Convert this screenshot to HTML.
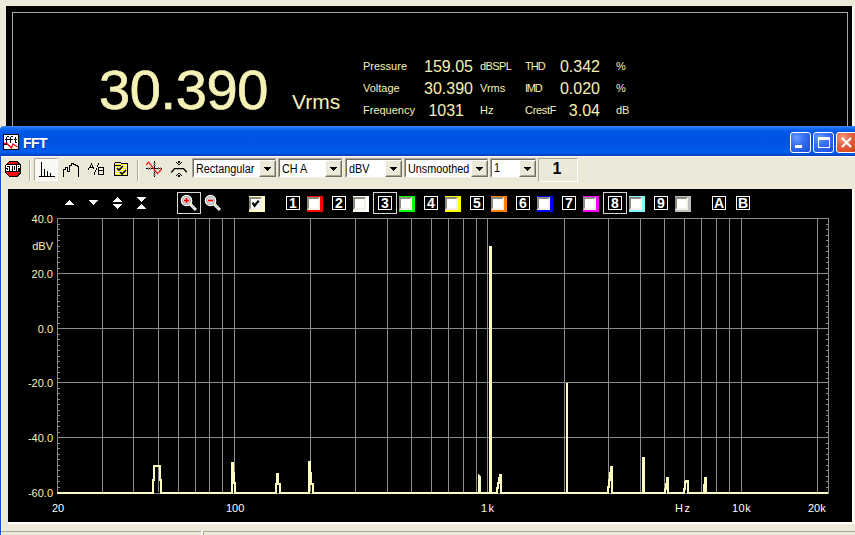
<!DOCTYPE html>
<html><head><meta charset="utf-8">
<style>
*{margin:0;padding:0;box-sizing:border-box}
html,body{width:855px;height:535px;overflow:hidden;background:#ece9d8;font-family:"Liberation Sans",sans-serif}
.a{position:absolute}
#top{left:6px;top:6px;width:846px;height:125px;background:#000}
#topw{left:852px;top:6px;width:2px;height:125px;background:#fffdf8}
#topin{left:12px;top:12px;width:836px;height:130px;border:1px solid #a8a8a8;border-bottom:none}
.y{color:#f6f1b6}
.lbl{font-size:11px;line-height:13px;white-space:nowrap}
.num{font-size:16px;line-height:18px;white-space:nowrap}
#win{left:0;top:126px;width:855px;height:409px;background:#ece9d8}
#title{left:0;top:126px;width:880px;height:30px;border-radius:4px 4px 0 0;
 background:linear-gradient(#3a86f4 0px,#2a7cf6 1px,#0f66f0 3px,#0058e8 6px,#0053e2 12px,#0055e6 20px,#005ef2 26px,#0050d8 28px,#003fb8 30px)}
#lb{left:0;top:156px;width:1px;height:379px;background:#0a4fd8}
#lb2{left:1px;top:156px;width:1px;height:379px;background:#fbf9f1}
#graph{left:8px;top:189px;width:844px;height:333px;background:#000}
#gw{left:8px;top:522px;width:847px;height:2px;background:#fffef8}
#gw2{left:852px;top:189px;width:2px;height:335px;background:#fffef8}
#stat{left:1px;top:531px;width:854px;height:1px;background:#aca899}
#stat2{left:201px;top:531px;width:2px;height:4px;background:#fff}
#stat3{left:203px;top:531px;width:1px;height:4px;background:#aca899}
.btn{top:132px;width:21px;height:21px;border:1px solid #fff;border-radius:3px;background:radial-gradient(circle at 30% 25%,#6a9cff 0%,#3a74f4 35%,#2356e6 80%,#1a4ad8 100%)}
.cl{background:radial-gradient(circle at 30% 25%,#f0a080 0%,#e46444 40%,#d84a20 80%,#c83c14 100%)}
.sep{top:160px;width:2px;height:21px;border-left:1px solid #aca899;border-right:1px solid #fff}
.cb{top:158px;height:20px;background:#fff;border:1px solid;border-color:#aca899 #f1efe2 #f1efe2 #aca899}
.cb:before{content:"";position:absolute;left:0;top:0;right:0;bottom:0;border:1px solid;border-color:#716f64 #fff #fff #716f64}
.cbt{position:absolute;left:3px;font-size:12px;line-height:14px;color:#000;white-space:nowrap;transform-origin:0 0;transform:scaleX(0.9)}
.dd{position:absolute;right:0;top:1px;width:17px;height:17px;background:#ece9d8;border:1px solid;border-color:#fff #716f64 #716f64 #fff}
.dd:before{content:"";position:absolute;left:0;top:0;right:0;bottom:0;border:1px solid;border-color:#ece9d8 #aca899 #aca899 #ece9d8}
.tri{position:absolute;left:4px;top:6px;width:7px;height:4px}
.nb{top:196px;width:14px;height:14px;border:1px solid #fff;color:#fff;font-size:14px;line-height:12px;font-weight:bold;text-align:center}
.sw{top:196px;width:16px;height:16px}
.sw div{position:absolute;left:0;top:1px;width:13px;height:13px;background:#fff;border:2px solid;border-color:#8c8a80 #f4f2e8 #f4f2e8 #8c8a80}
.ylab{left:0;width:53px;text-align:right;font-size:11px;line-height:13px;color:#f6f1b6;white-space:nowrap}
.xlab{top:502px;font-size:11px;line-height:13px;color:#fff;white-space:nowrap}
</style></head><body>
<div class="a" id="top"></div>
<div class="a" id="topw"></div>
<div class="a" id="topin"></div>

<div class="a y" style="left:99px;top:59px;font-size:56px;line-height:62px;letter-spacing:-0.4px;-webkit-text-stroke:0.7px #f6f1b6">30.390</div>
<div class="a y" style="left:292px;top:91px;font-size:21px;line-height:22px">Vrms</div>

<div class="a y lbl" style="left:363px;top:60px">Pressure</div>
<div class="a y lbl" style="left:363px;top:82px">Voltage</div>
<div class="a y lbl" style="left:363px;top:104px">Frequency</div>

<div class="a y num" style="left:370px;width:103px;text-align:right;top:58px">159.05</div>
<div class="a y num" style="left:370px;width:103px;text-align:right;top:80px">30.390</div>
<div class="a y num" style="left:370px;width:94px;text-align:right;top:102px">1031</div>

<div class="a y lbl" style="left:480px;top:60px;letter-spacing:-0.6px">dBSPL</div>
<div class="a y lbl" style="left:480px;top:82px">Vrms</div>
<div class="a y lbl" style="left:480px;top:104px">Hz</div>

<div class="a y lbl" style="left:525px;top:60px;letter-spacing:-0.9px">THD</div>
<div class="a y lbl" style="left:525px;top:82px;letter-spacing:-1.2px">IMD</div>
<div class="a y lbl" style="left:525px;top:104px;letter-spacing:-0.3px">CrestF</div>

<div class="a y num" style="left:500px;width:100px;text-align:right;top:58px">0.342</div>
<div class="a y num" style="left:500px;width:100px;text-align:right;top:80px">0.020</div>
<div class="a y num" style="left:500px;width:100px;text-align:right;top:102px">3.04</div>

<div class="a y lbl" style="left:616px;top:60px">%</div>
<div class="a y lbl" style="left:616px;top:82px">%</div>
<div class="a y lbl" style="left:616px;top:104px">dB</div>

<div class="a" id="win"></div>
<div class="a" id="title"></div>
<div class="a" id="lb"></div>
<div class="a" id="lb2"></div>
<div class="a" id="graph"></div>
<div class="a" id="gw"></div>
<div class="a" id="gw2"></div>
<div class="a" id="stat"></div>
<div class="a" id="stat2"></div>
<div class="a" id="stat3"></div>


<svg class="a" style="left:3px;top:134px" width="16" height="16" viewBox="0 0 16 16" shape-rendering="crispEdges">
<rect x="0" y="0" width="16" height="16" fill="#000"/>
<rect x="1" y="1" width="14" height="14" fill="#fff"/>
<path fill="#000" d="M3 3h1v6h-1zM4 2h2v1h-2zM2 5h4v1h-4zM7 3h1v6h-1zM8 2h2v1h-2zM6 5h4v1h-4zM12 3h1v5h-1zM11 5h3v1h-3zM12 8h2v1h-2z"/>
<path d="M1 10.5H4.5L7.5 13.5" stroke="#000" fill="none" stroke-width="1" shape-rendering="auto"/>
<path d="M1 9.5H4L8.5 14L10 10L14.5 13" stroke="#f00" fill="none" stroke-width="1.3" shape-rendering="auto"/>
</svg>
<div class="a" style="left:23px;top:135px;font-size:14px;line-height:16px;font-weight:bold;color:#fff;letter-spacing:-0.6px;text-shadow:1px 1px 0 #0a3aa8">FFT</div>
<div class="a btn" style="left:790px"><div style="position:absolute;left:4px;top:12px;width:7px;height:3px;background:#fff"></div></div>
<div class="a btn" style="left:813px"><div style="position:absolute;left:4px;top:4px;width:12px;height:11px;border:1px solid #fff;border-top-width:3px"></div></div>
<div class="a btn cl" style="left:836px"><svg width="19" height="19" style="position:absolute;left:0;top:0"><path d="M5 5L14 14M14 5L5 14" stroke="#fff" stroke-width="2.2"/></svg></div>

<div class="a" style="left:1px;top:156px;width:854px;height:1px;background:#fffef6"></div>
<svg class="a" style="left:5px;top:161px" width="16" height="16" viewBox="0 0 16 16" shape-rendering="crispEdges">
<path d="M4 0h8l4 4v8l-4 4h-8l-4-4v-8z" fill="#000"/>
<path d="M4.5 1h7l3.5 3.5v7l-3.5 3.5h-7l-3.5-3.5v-7z" fill="#f20d0d" shape-rendering="auto"/>
<rect x="1" y="3" width="14" height="8" fill="#000"/>
<path fill="#fff" d="M1 4h3v1h-3zM1 5h1v1h-1zM1 6h3v1h-3zM3 7h1v2h-1zM1 9h3v1h-3zM1 8h1v1h-1z
M4 4h4v1h-4zM5 5h2v5h-2z
M8 4h3v1h-3zM8 5h1v4h-1zM10 5h1v4h-1zM8 9h3v1h-3zM12 4h3v1h-3zM12 5h1v5h-1zM14 5h1v2h-1zM12 6h3v1h-3z"/>
</svg>
<div class="a sep" style="left:29px"></div>
<div class="a" style="left:34px;top:158px;width:24px;height:23px;border:1px solid #aca899;border-right-color:#fff;border-bottom-color:#fff;background-color:#f4f2ea;background-image:linear-gradient(45deg,#fff 25%,transparent 25%,transparent 75%,#fff 75%),linear-gradient(45deg,#fff 25%,transparent 25%,transparent 75%,#fff 75%);background-size:2px 2px;background-position:0 0,1px 1px"></div>
<svg class="a" style="left:34px;top:157px" width="130" height="24" shape-rendering="crispEdges">
<path d="M5 19.5h16M7.5 5v15M10.5 12v8M13.5 14v6M16.5 16v4" stroke="#000" fill="none"/>
</svg>
<svg class="a" style="left:60px;top:160px" width="24" height="20" shape-rendering="crispEdges">
<path d="M3.5 16.5V9.5h2V7.5h2V11.5h2V5.5h2V3.5h2v1h2v1h2v1h1v10" stroke="#000" fill="none" transform="translate(0,0)"/>
</svg>
<svg class="a" style="left:84px;top:160px" width="24" height="20" shape-rendering="crispEdges">
<path d="M7 3h1v2h-1zM6 5h1v2h-1zM8 5h1v2h-1zM5 7h5v1h-5zM4 8h1v2h-1zM9 8h1v1h-1z" fill="#000"/>
<path d="M14 3h1v2h-1zM13 5h1v2h-1zM12 8h1v2h-1zM11 10h1v2h-1zM10 12h1v3h-1z" fill="#000"/>
<path d="M14 7h6v1h-6zM14 7h1v8h-1zM19 7h1v8h-1zM15 10h4v1h-4zM14 14h6v1h-6z" fill="#000"/>
</svg>
<svg class="a" style="left:110px;top:159px" width="22" height="20" shape-rendering="crispEdges">
<defs><pattern id="dy" width="2" height="2" patternUnits="userSpaceOnUse"><rect width="2" height="2" fill="#ffff00"/><rect width="1" height="1" fill="#fff"/></pattern></defs>
<rect x="4.5" y="4.5" width="13" height="12" fill="url(#dy)" stroke="#000"/>
<path d="M5 3.5h6" stroke="#000"/>
<path d="M5 4h6v2h-6z" fill="url(#dy)"/>
<path d="M5 6.5h6" stroke="#000"/>
<path d="M7 9l2 2 4-4" stroke="#000" stroke-width="1.6" fill="none" shape-rendering="auto"/>
<path d="M10 13l2 2 4-4" stroke="#000" stroke-width="1.6" fill="none" shape-rendering="auto"/>
</svg>
<div class="a sep" style="left:137px"></div>
<svg class="a" style="left:140px;top:156px" width="56" height="24">
<g shape-rendering="crispEdges" fill="#000">
<rect x="14" y="5" width="1" height="16"/><rect x="6" y="12" width="16" height="1"/>
</g>
<g shape-rendering="crispEdges" fill="#9a9890">
<rect x="13" y="7" width="3" height="1"/><rect x="13" y="9" width="3" height="1"/><rect x="13" y="15" width="3" height="1"/><rect x="13" y="17" width="3" height="1"/><rect x="13" y="19" width="3" height="1"/>
<rect x="8" y="11" width="1" height="3"/><rect x="10" y="11" width="1" height="3"/><rect x="18" y="11" width="1" height="3"/><rect x="20" y="11" width="1" height="3"/>
</g>
<path d="M6.3 8.7L8.5 6.2L17.5 17.6L21.5 13.2" stroke="#ff1010" stroke-width="1.3" fill="none"/>
<g shape-rendering="crispEdges" fill="#000">
<rect x="38" y="5" width="2" height="2"/><rect x="36" y="6" width="1" height="1"/><rect x="37" y="7" width="1" height="1"/><rect x="38" y="8" width="2" height="1"/><rect x="40" y="7" width="1" height="1"/><rect x="41" y="6" width="1" height="1"/>
<rect x="38" y="19" width="2" height="2"/><rect x="36" y="19" width="1" height="1"/><rect x="37" y="18" width="1" height="1"/><rect x="38" y="17" width="2" height="1"/><rect x="40" y="18" width="1" height="1"/><rect x="41" y="19" width="1" height="1"/>
</g>
<path d="M31.3 16.5L34.5 12.6H43.5L46.8 16.3" stroke="#000" stroke-width="1.3" fill="none"/>
</svg>
<div class="a cb" style="left:192px;width:85px"><div class="cbt" style="top:3px">Rectangular</div><div class="dd"><svg class="tri" width="7" height="4" shape-rendering="crispEdges"><path d="M0 0h7v1h-1v1h-1v1h-1v1h-1v-1h-1v-1h-1v-1h-1z"/></svg></div></div>
<div class="a cb" style="left:278px;width:65px"><div class="cbt" style="top:3px">CH A</div><div class="dd"><svg class="tri" width="7" height="4" shape-rendering="crispEdges"><path d="M0 0h7v1h-1v1h-1v1h-1v1h-1v-1h-1v-1h-1v-1h-1z"/></svg></div></div>
<div class="a cb" style="left:345px;width:58px"><div class="cbt" style="top:3px">dBV</div><div class="dd"><svg class="tri" width="7" height="4" shape-rendering="crispEdges"><path d="M0 0h7v1h-1v1h-1v1h-1v1h-1v-1h-1v-1h-1v-1h-1z"/></svg></div></div>
<div class="a cb" style="left:404px;width:85px"><div class="cbt" style="top:3px">Unsmoothed</div><div class="dd"><svg class="tri" width="7" height="4" shape-rendering="crispEdges"><path d="M0 0h7v1h-1v1h-1v1h-1v1h-1v-1h-1v-1h-1v-1h-1z"/></svg></div></div>
<div class="a cb" style="left:490px;width:47px"><div class="cbt" style="top:2px">1</div><div class="dd"><svg class="tri" width="7" height="4" shape-rendering="crispEdges"><path d="M0 0h7v1h-1v1h-1v1h-1v1h-1v-1h-1v-1h-1v-1h-1z"/></svg></div></div>

<div class="a" style="left:538px;top:158px;width:40px;height:24px;border:1px solid #aca899;border-right-color:#fff;border-bottom-color:#fff"></div>
<div class="a" style="left:537px;top:160px;width:40px;text-align:center;font-size:16px;line-height:18px;font-weight:bold;color:#000">1</div>

<svg class="a" style="left:0;top:189px" width="855" height="30" shape-rendering="crispEdges">
<path d="M64 16h10l-5-5z" fill="#fff"/>
<path d="M88 11h10l-5 5z" fill="#fff"/>
<path d="M112 13h10l-5-5zM112 15h10l-5 5z" fill="#fff"/>
<path d="M136 8h10l-5 5zM136 20h10l-5-5z" fill="#fff"/>
<rect x="177.5" y="3.5" width="23" height="21" fill="none" stroke="#d8d8d8"/>
</svg>
<svg class="a" style="left:176px;top:189px" width="60" height="30">
<path d="M14 15l6 6" stroke="#fff" stroke-width="3"/>
<path d="M14.5 15.5l5.5 5.5" stroke="#777" stroke-width="1" stroke-dasharray="1 1"/>
<path d="M14 14l1.5 1.5" stroke="#ff0" stroke-width="2"/>
<circle cx="10.5" cy="11.5" r="5.2" fill="#a8a8a8" stroke="#fff" stroke-width="1.2"/>
<circle cx="10.5" cy="11.5" r="3.4" fill="#d8d8d8"/>
<path d="M10.5 9v5M8 11.5h5" stroke="#f00" stroke-width="1.6"/>
<path d="M38 15l6 6" stroke="#fff" stroke-width="3"/>
<path d="M38.5 15.5l5.5 5.5" stroke="#777" stroke-width="1" stroke-dasharray="1 1"/>
<path d="M38 14l1.5 1.5" stroke="#ff0" stroke-width="2"/>
<circle cx="34.5" cy="11.5" r="5.2" fill="#a8a8a8" stroke="#fff" stroke-width="1.2"/>
<circle cx="34.5" cy="11.5" r="3.4" fill="#d8d8d8"/>
<path d="M32 11.5h5" stroke="#f00" stroke-width="1.6"/>
</svg>
<div class="a sw" style="left:249px;top:196px;background:#ffffc4"><div></div></div>
<svg class="a" style="left:249px;top:196px" width="16" height="16"><path d="M3.6 6.6L5.6 9.8L9.8 4.6" stroke="#000" stroke-width="2.2" fill="none"/></svg>
<div class="a nb" style="left:286px">1</div>
<div class="a sw" style="left:307px;background:#ff0000"><div></div></div>
<div class="a nb" style="left:332px">2</div>
<div class="a sw" style="left:353px;background:#ffffff"><div></div></div>
<div class="a nb" style="left:378px">3</div>
<div class="a sw" style="left:399px;background:#00ff00"><div></div></div>
<div class="a nb" style="left:424px">4</div>
<div class="a sw" style="left:445px;background:#ffff00"><div></div></div>
<div class="a nb" style="left:470px">5</div>
<div class="a sw" style="left:491px;background:#ff8000"><div></div></div>
<div class="a nb" style="left:516px">6</div>
<div class="a sw" style="left:537px;background:#0000ff"><div></div></div>
<div class="a nb" style="left:562px">7</div>
<div class="a sw" style="left:583px;background:#ff00ff"><div></div></div>
<div class="a nb" style="left:608px">8</div>
<div class="a sw" style="left:629px;background:#80ffff"><div></div></div>
<div class="a nb" style="left:654px">9</div>
<div class="a sw" style="left:675px;background:#c0c0c0"><div></div></div>
<div class="a" style="left:373px;top:192px;width:24px;height:22px;border:1px solid #d8d8d8"></div>
<div class="a" style="left:603px;top:192px;width:24px;height:22px;border:1px solid #d8d8d8"></div>
<div class="a nb" style="left:712px">A</div>
<div class="a nb" style="left:736px">B</div>

<svg class="a" style="left:0;top:0" width="855" height="535" shape-rendering="crispEdges">
<g stroke="#8c8c8c" fill="none">
<path d="M102.5 218V492M133.5 218V492M158.5 218V492M178.5 218V492M195.5 218V492M209.5 218V492M222.5 218V492M234.5 218V492M310.5 218V492M355.5 218V492M387.5 218V492M411.5 218V492M431.5 218V492M448.5 218V492M463.5 218V492M476.5 218V492M487.5 218V492M564.5 218V492M608.5 218V492M640.5 218V492M664.5 218V492M684.5 218V492M701.5 218V492M716.5 218V492M729.5 218V492M741.5 218V492M817.5 218V492M57 273.5H828M57 328.5H828M57 382.5H828M57 437.5H828M57.5 218V493.5M57 218.5H828.5M828.5 218V493.5M57 493.5H828.5M57 224.5h3M829 224.5h-3M57 229.5h3M829 229.5h-3M57 235.5h3M829 235.5h-3M57 240.5h3M829 240.5h-3M57 246.5h3M829 246.5h-3M57 251.5h3M829 251.5h-3M57 257.5h3M829 257.5h-3M57 262.5h3M829 262.5h-3M57 268.5h3M829 268.5h-3M57 279.5h3M829 279.5h-3M57 284.5h3M829 284.5h-3M57 290.5h3M829 290.5h-3M57 295.5h3M829 295.5h-3M57 301.5h3M829 301.5h-3M57 306.5h3M829 306.5h-3M57 312.5h3M829 312.5h-3M57 317.5h3M829 317.5h-3M57 323.5h3M829 323.5h-3M57 334.5h3M829 334.5h-3M57 339.5h3M829 339.5h-3M57 345.5h3M829 345.5h-3M57 350.5h3M829 350.5h-3M57 356.5h3M829 356.5h-3M57 361.5h3M829 361.5h-3M57 367.5h3M829 367.5h-3M57 372.5h3M829 372.5h-3M57 378.5h3M829 378.5h-3M57 388.5h3M829 388.5h-3M57 393.5h3M829 393.5h-3M57 399.5h3M829 399.5h-3M57 404.5h3M829 404.5h-3M57 410.5h3M829 410.5h-3M57 415.5h3M829 415.5h-3M57 421.5h3M829 421.5h-3M57 426.5h3M829 426.5h-3M57 432.5h3M829 432.5h-3M57 443.5h3M829 443.5h-3M57 448.5h3M829 448.5h-3M57 454.5h3M829 454.5h-3M57 459.5h3M829 459.5h-3M57 465.5h3M829 465.5h-3M57 470.5h3M829 470.5h-3M57 476.5h3M829 476.5h-3M57 481.5h3M829 481.5h-3M57 487.5h3M829 487.5h-3"/>
</g>
<path d="M57 493 L153 493 L153 480 L154 480 L154 466 L160 466 L160 480 L161 480 L161 493 L232 493 L232 463 L233 463 L233 473 L234 473 L234 483 L235 483 L235 493 L276 493 L276 484 L277 484 L277 474 L278 474 L278 484 L280 484 L280 493 L309 493 L309 462 L310 462 L310 473 L311 473 L311 484 L313 484 L313 493 L479 493 L479 476 L480 477 L480 493 L490 493 L490 247 L491 247 L491 493 L497 493 L497 488 L498 488 L498 483 L499 483 L499 478 L500 478 L500 475 L501 475 L501 493 L567 493 L567 383 L567 493 L608 493 L608 487 L609 487 L609 480 L610 480 L610 473 L611 473 L611 467 L612 467 L612 493 L643 493 L643 458 L644 458 L644 493 L665 493 L665 489 L666 489 L666 484 L667 484 L667 478 L668 478 L668 493 L684 493 L684 489 L685 489 L685 482 L686 482 L686 481 L688 481 L688 493 L704 493 L704 485 L705 485 L705 478 L706 478 L706 493 L828 493" stroke="#fffcc0" stroke-width="2" fill="none" stroke-linejoin="miter" shape-rendering="auto"/>
</svg>
<div class="a ylab" style="top:213px">40.0</div>
<div class="a ylab" style="top:240px">dBV</div>
<div class="a ylab" style="top:268px">20.0</div>
<div class="a ylab" style="top:323px">0.0</div>
<div class="a ylab" style="top:377px">-20.0</div>
<div class="a ylab" style="top:432px">-40.0</div>
<div class="a ylab" style="top:487px">-60.0</div>
<div class="a xlab" style="left:52px">20</div>
<div class="a xlab" style="left:226px">100</div>
<div class="a xlab" style="left:481px;letter-spacing:1.5px">1k</div>
<div class="a xlab" style="left:675px;letter-spacing:1.5px">Hz</div>
<div class="a xlab" style="left:732px;letter-spacing:0.5px">10k</div>
<div class="a xlab" style="left:808px">20k</div>

</body></html>
